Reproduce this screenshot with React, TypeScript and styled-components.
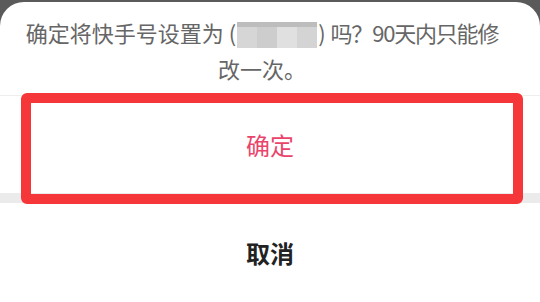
import styled, { createGlobalStyle } from "styled-components";

const Global = createGlobalStyle`
  html, body {
    margin: 0;
    padding: 0;
    background: #5a5a5a;
  }
  body {
    width: 540px;
    height: 302px;
    overflow: hidden;
    font-family: "Noto Sans CJK SC", "Noto Sans", sans-serif;
  }
`;

const Sheet = styled.div`
  position: relative;
  margin-top: 2px;
  width: 540px;
  height: 300px;
  background: #fff;
  border-radius: 24px 24px 0 0;
  display: flex;
  flex-direction: column;
  overflow: hidden;
`;

const Message = styled.div`
  height: 94px;
  padding: 12px 36px 0 20px;
  box-sizing: border-box;
  border-bottom: 1px solid #eeeeee;
  text-align: center;
  font-size: 22px;
  line-height: 36px;
  color: #666666;
  white-space: nowrap;
`;

const Tail = styled.span`
  letter-spacing: -1.2px;
`;

const Masked = styled.span`
  display: inline-block;
  vertical-align: -6px;
  width: 80px;
  height: 26px;
  background: linear-gradient(
    to right,
    #d6d6d6 0 25%,
    #cdcdcd 25% 50%,
    #e0e0e0 50% 75%,
    #d4d4d4 75% 100%
  );
  border-top: 5px solid #bdbdbd;
  box-sizing: border-box;
  margin: 0 1px;
`;

const Action = styled.div<{ $tone: "primary" | "plain" }>`
  flex: 0 0 auto;
  height: ${(p) => (p.$tone === "primary" ? "97px" : "99px")};
  display: flex;
  align-items: center;
  justify-content: center;
  font-size: 24px;
  color: ${(p) => (p.$tone === "primary" ? "#e9456b" : "#222222")};
  font-weight: ${(p) => (p.$tone === "primary" ? 400 : 700)};
`;

const Gap = styled.div`
  height: 10px;
  background: #ebebeb;
`;

const Highlight = styled.div`
  position: absolute;
  left: 21px;
  top: 91px;
  width: 502px;
  height: 111px;
  border: 10px solid #f5373a;
  border-radius: 6px;
  box-sizing: border-box;
  pointer-events: none;
`;

export default function App() {
  return (
    <>
      <Global />
      <Sheet>
        <Message>
          确定将快手号设置为 (<Masked />) <Tail>吗？90天内只能修</Tail>
          <br />
          改一次。
        </Message>
        <Action $tone="primary">确定</Action>
        <Gap />
        <Action $tone="plain">取消</Action>
        <Highlight />
      </Sheet>
    </>
  );
}
